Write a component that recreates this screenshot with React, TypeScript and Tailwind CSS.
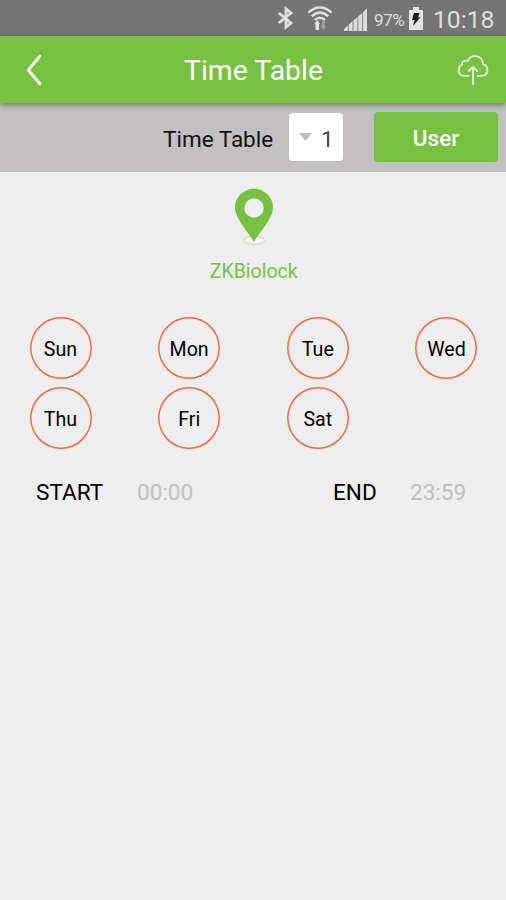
import React, { useState } from 'react';
import { clsx } from 'clsx';

const DAYS = ['Sun', 'Mon', 'Tue', 'Wed', 'Thu', 'Fri', 'Sat'];

const BluetoothIcon = () => (
  <svg width="18" height="24" viewBox="0 0 18 24" fill="none" stroke="#dedede" strokeWidth="2.8">
    <path d="M1.8 7 14 17 9 21V3L14 7 1.8 17" />
  </svg>
);

const WifiIcon = () => (
  <svg width="26" height="26" viewBox="0 0 26 26" fill="none">
    <path d="M1.5 7.5Q13 -2.5 24.5 7.5M4.7 11.3Q13 4 21.3 11.3M8 15Q13 10.5 18 15" stroke="#dedede" strokeWidth="2.5" />
    <path d="M10.3 15.2 13.3 19H12.1V25H8.5V19H7.3z" fill="#e6e6e6" />
    <path d="M16.5 25 13.7 20.8H15V16H18V20.8H19.3z" fill="#a0a0a0" />
  </svg>
);

const SignalIcon = () => (
  <svg width="24" height="23" viewBox="0 0 24 23" fill="#dedede">
    <path d="M0 23V21L3.8 17.5V23zM4.7 23V16.8L8.6 13.2V23zM9.5 23V12.4L13.4 9V23zM14.3 23V8.6L18.2 5V23zM19.1 23V4L23 0.5V23z" />
  </svg>
);

const BatteryIcon = () => (
  <svg width="14" height="23" viewBox="0 0 14 23">
    <path d="M4 0H10V3H14V23H0V3H4z" fill="#e2e2e2" />
    <path d="M5 6H10.5L9 10.5H11.5L3.8 19 5.6 13H3z" fill="#1d1d1d" />
  </svg>
);

const BackIcon = () => (
  <svg width="16" height="32" viewBox="0 0 16 32" fill="none" stroke="#fff" strokeWidth="2.8" strokeLinecap="round" strokeLinejoin="round">
    <path d="M14 2 2.3 16 14 30" />
  </svg>
);

const CloudIcon = () => (
  <svg width="32" height="30" viewBox="0 0 32 30" fill="none" stroke="#e9f7dc" strokeWidth="1.8" strokeLinecap="round" strokeLinejoin="round">
    <path d="M11.5 20.8H8C3.8 20.8 1.6 18.6 1.6 15.2C1.6 12.4 3 10.6 5 9.7C4.8 6.8 7.5 4.8 10.6 6.2C12 3 14.8 1.2 18 1.2C22.7 1.2 25.8 4.4 25.9 9C29 10 30.4 12.4 30.4 15.1C30.4 18.6 28.2 20.8 24.5 20.8H20.5" />
    <path d="M16 29V12.5M11.8 16 16 12 20.2 16" />
  </svg>
);

const PinIcon = () => (
  <svg width="40" height="58" viewBox="0 0 40 58">
    <ellipse cx="20" cy="52.3" rx="10.5" ry="4" fill="#f4f4f4" stroke="#cbdabd" strokeWidth="1" />
    <path d="M20 54C16.2 46 1 31.5 1 19.5A19 18.8 0 0 1 39 19.5C39 31.5 23.8 46 20 54z" fill="#79c142" />
    <circle cx="20" cy="20" r="9.7" fill="#f0f0f0" />
  </svg>
);

export default function App() {
  const [selected, setSelected] = useState<string[]>([]);

  const toggle = (day: string) =>
    setSelected(s => (s.includes(day) ? s.filter(d => d !== day) : [...s, day]));

  return (
    <div className="w-[506px] h-[900px] flex flex-col overflow-hidden bg-[#eeeeee] font-[Roboto,sans-serif] text-black">

      {/* STATUS BAR */}
      <div className="h-9 shrink-0 flex items-center pl-[277px] bg-[#757575] text-[#dedede]">
        <BluetoothIcon />
        <div className="ml-3"><WifiIcon /></div>
        <div className="ml-[11px] mt-0.5"><SignalIcon /></div>
        <span className="w-[34px] ml-[6px] mt-1 text-[17px] leading-none tracking-[-0.4px]">97%</span>
        <div className="ml-[1px]"><BatteryIcon /></div>
        <span className="ml-[10px] mt-1 text-[24.7px] leading-none">10:18</span>
      </div>

      {/* TITLE BAR */}
      <header className="relative z-10 h-[67px] shrink-0 flex items-center pl-[26px] bg-[#79c142] shadow-[0_2px_6px_rgba(0,0,0,0.4)]">
        <button className="w-[158px]"><BackIcon /></button>
        <h1 className="w-[273px] mt-1 text-[28.4px] leading-none text-white">Time Table</h1>
        <button><CloudIcon /></button>
      </header>

      {/* TOOLBAR */}
      <div className="h-[69px] shrink-0 flex items-center pl-[163px] pb-0.5 bg-[#c2c0c1]">
        <span className="w-[126px] mt-[5px] text-[22.5px] leading-none text-[#111]">Time Table</span>
        <button className="w-[54px] h-12 flex items-center rounded-[4px] bg-white pl-[10px]">
          <svg width="14" height="8" viewBox="0 0 14 8" fill="#c0c0c0"><path d="M0 0H13L6.5 8z" /></svg>
          <span className="ml-2 mt-[5px] text-[22.5px] leading-none text-[#444]">1</span>
        </button>
        <button className="w-[124px] h-[50px] ml-[31px] pt-[3px] rounded-[4px] bg-[#79c142] text-[22.5px] leading-none font-medium text-white">User</button>
      </div>

      {/* LOCATION */}
      <div className="flex flex-col items-center pt-4 pl-[1.5px]">
        <PinIcon />
        <span className="mt-4 text-[19.5px] leading-5 text-[#79c142]">ZKBiolock</span>
      </div>

      {/* DAYS */}
      <div className="grid grid-cols-[repeat(4,62px)] justify-between gap-y-2 pl-[29.5px] pr-[28.5px] mt-[35px]">
        {DAYS.map(day => (
          <button
            key={day}
            onClick={() => toggle(day)}
            className={clsx(
              'w-[62px] h-[62px] pt-[3px] rounded-full shadow-[inset_0_0_0_1.5px_#f4683f] text-[19.6px] leading-5',
              selected.includes(day) && 'bg-[#f4683f] text-white'
            )}
          >
            {day}
          </button>
        ))}
      </div>

      {/* TIME RANGE */}
      <div className="flex pl-9 mt-8 text-[22.6px] leading-[23px]">
        <span className="w-[101px]">START</span>
        <span className="w-[196px] text-[#c0c0c0]">00:00</span>
        <span className="w-[77px]">END</span>
        <span className="text-[#c0c0c0]">23:59</span>
      </div>
    </div>
  );
}
